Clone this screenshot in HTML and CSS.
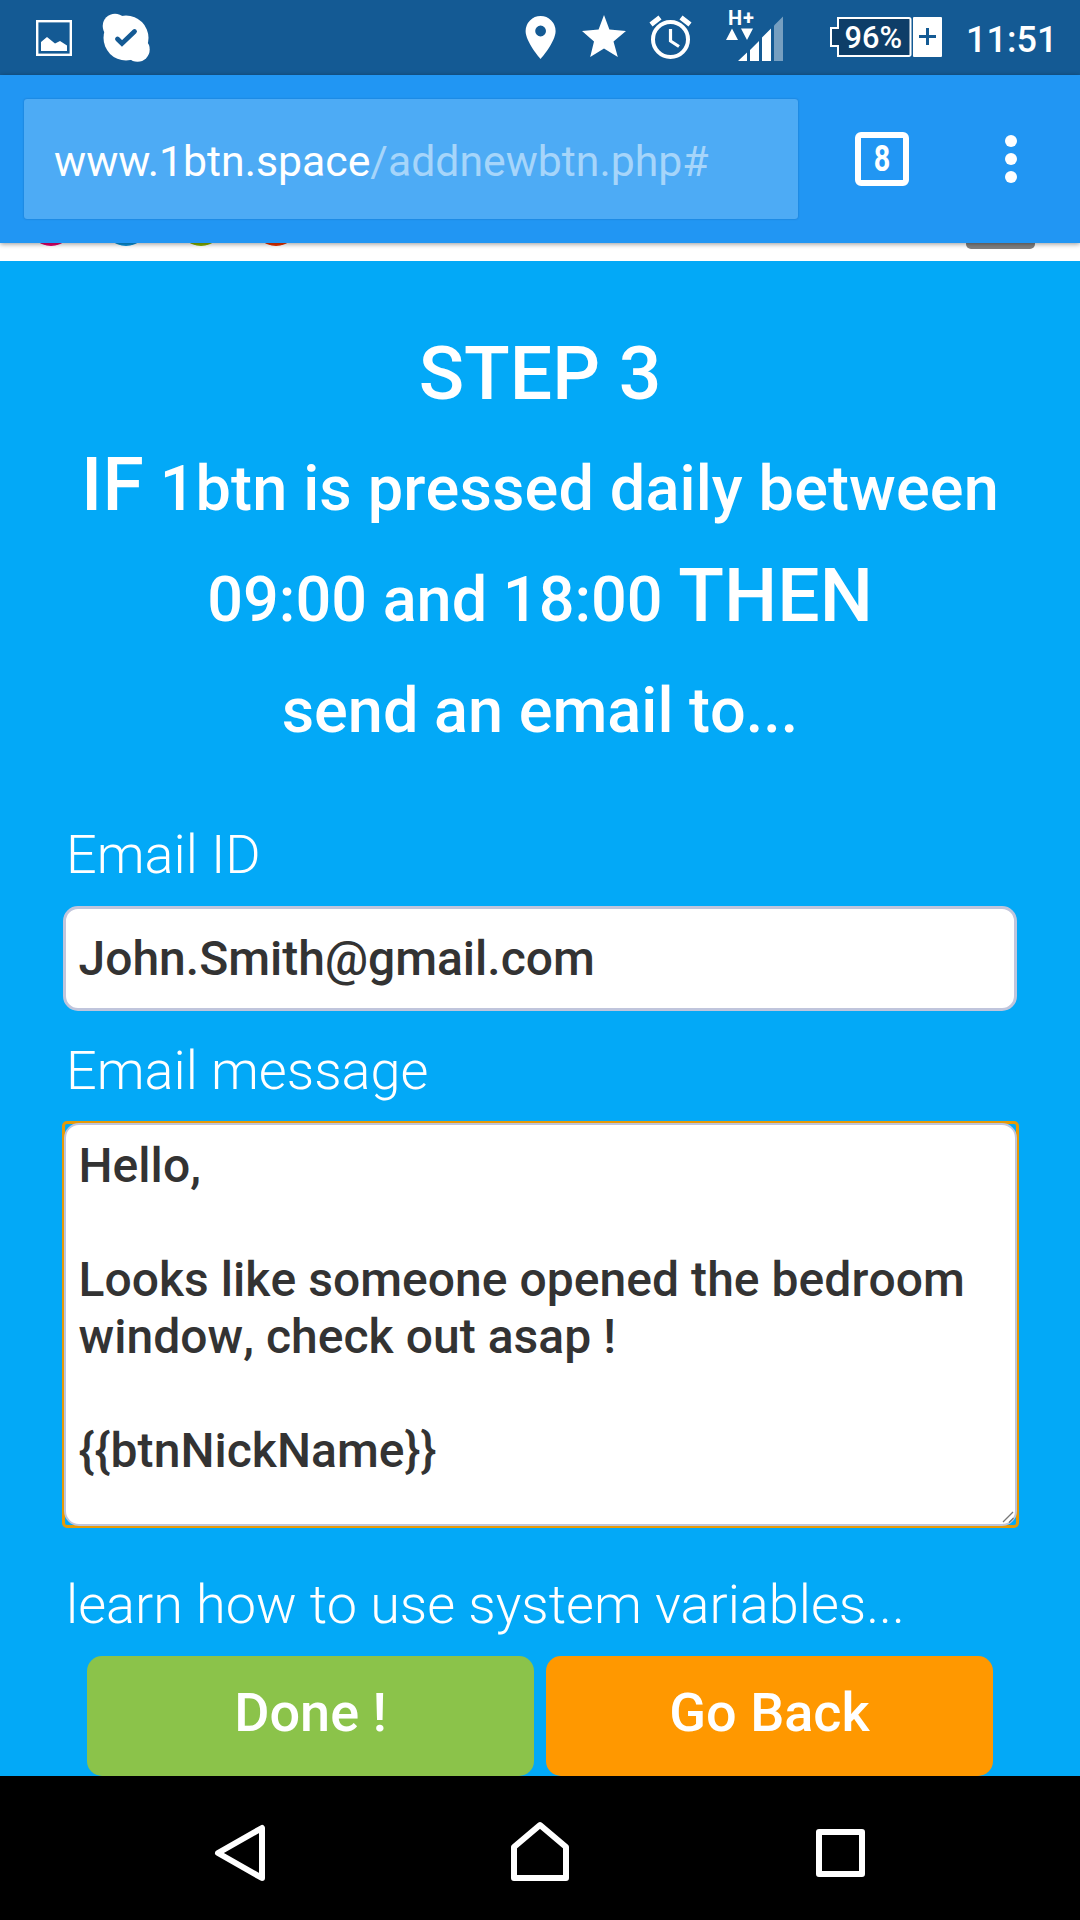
FILE: index.html
```html
<!DOCTYPE html>
<html lang="en">
<head>
<meta charset="utf-8">
<title>1btn</title>
<link rel="stylesheet" href="styles.css">
</head>
<body>
<div class="screen">
  <header class="status">
    <svg class="ic-photo" width="36" height="75" viewBox="36 0 36 75"><rect x="37.2" y="21.2" width="33.6" height="33.6" fill="none" stroke="#fff" stroke-width="2.4"/><path d="M41 51V42L47 37 55 43.500 60 41 67 45.500V51Z" fill="#fff"/></svg>
    <svg class="ic-skype" width="48" height="75" viewBox="102 0 48 75"><g fill="#fff"><circle cx="126" cy="38" r="22.500"/><circle cx="115" cy="26" r="12.300"/><circle cx="137.500" cy="49.500" r="12.200"/></g><path d="M117.500 39 122 43.500 134.500 31.500" fill="none" stroke="#145a94" stroke-width="4.800" stroke-linecap="round"/></svg>
    <svg class="ic-pin" width="31" height="75" viewBox="525 0 31 75"><path fill="#fff" fill-rule="evenodd" d="M540.600 16A15 15 0 0 0 525.600 31C525.600 42 540.600 59 540.600 59S555.600 42 555.600 31A15 15 0 0 0 540.600 16ZM540.600 25.600a5.400 5.400 0 1 1 0 10.800a5.400 5.400 0 0 1 0-10.800Z"/></svg>
    <svg class="ic-star" width="44" height="75" viewBox="582 0 44 75"><path fill="#fff" d="M604 15 609.400 29.500 626 31 613.500 41.500 617.800 57 604 48.400 590.200 57 594 41.500 582 31 598.600 29.500Z"/></svg>
    <svg class="ic-alarm" width="44" height="75" viewBox="649 0 44 75"><g fill="none" stroke="#fff"><circle cx="670.500" cy="39.500" r="17.500" stroke-width="4"/><path d="M670.500 29V41L679 46.500" stroke-width="3.200"/><path d="M651 24.500 660 17.500M690 24.500 681 17.500" stroke-width="5"/></g></svg>
    <svg class="ic-signal" width="58" height="75" viewBox="726 0 58 75"><text class="net" x="728" y="25" textLength="26">H+</text><g fill="#fff"><path d="M726 40H738L732 28.500ZM741 28.500H753L747 40Z"/><path d="M738 61 747 52.500V61ZM750 61V50L759 41V61ZM762 61V37.500L771 28.500V61Z"/><path opacity=".42" d="M774 61V25.500L783 16.500V61Z"/></g></svg>
    <svg class="ic-batt" width="113" height="75" viewBox="830 0 113 75"><path d="M838 18H909a1.500 1.500 0 0 1 1.500 1.500V54.500a1.500 1.500 0 0 1-1.500 1.500H838V46H831V28H838Z" fill="#0e3e68" stroke="#fff" stroke-width="2"/><rect x="913" y="17" width="29" height="40" rx="1" fill="#fff"/><path d="M927.500 28V45M919 36.500H936" stroke="#145a94" stroke-width="3"/><text class="pct" x="844.500" y="47.700" textLength="57.500" lengthAdjust="spacingAndGlyphs">96%</text></svg>
    <time class="clock">11:51</time>
  </header>

  <div class="toolbar">
    <div class="url"><span class="host">www.1btn.space</span><span class="path">/addnewbtn.php#</span></div>
    <div class="tabs"><span>8</span></div>
    <svg class="more" width="12" height="48" viewBox="0 0 12 48" fill="#fff"><circle cx="6" cy="6" r="6"/><circle cx="6" cy="24" r="6"/><circle cx="6" cy="42" r="6"/></svg>
  </div>

  <div class="peek">
    <svg width="1080" height="18" viewBox="0 0 1080 18"><circle cx="51" cy="-19" r="22" fill="#e6006c"/><circle cx="126" cy="-19" r="22" fill="#0a94dc"/><circle cx="201" cy="-19" r="22" fill="#86b000"/><circle cx="276" cy="-19" r="22" fill="#ea3200"/><rect x="966" y="-20" width="69" height="26" rx="5" fill="#808080"/></svg>
  </div>

  <main class="page">
    <h1>STEP 3</h1>
    <p class="rule"><span class="loose"><b>IF</b> 1btn is pressed daily between</span><br>09:00 and 18:00 <b>THEN</b><br>send an email to...</p>
    <label class="label" for="email">Email ID</label>
    <input class="field" id="email" type="text" value="John.Smith@gmail.com">
    <label class="label second" for="msg">Email message</label>
    <div class="area">
      <textarea class="field" id="msg" spellcheck="false">Hello,

Looks like someone opened the bedroom window, check out asap !

{{btnNickName}}</textarea>
      <svg class="grip" width="12" height="12" viewBox="0 0 12 12"><path d="M1 11 11 1M7 11.500 11.500 7" stroke="#777" stroke-width="1.300"/></svg>
    </div>
    <a class="label learn">learn how to use system variables...</a>
    <div class="actions">
      <button class="btn done">Done !</button>
      <button class="btn back">Go Back</button>
    </div>
  </main>

  <nav class="nav">
    <svg width="1080" height="144" viewBox="0 1776 1080 144" fill="none" stroke="#fff" stroke-width="6" stroke-linejoin="round"><path d="M218 1853 262 1828V1878Z" class="back-key"/><path d="M514 1847 540 1825 566 1847V1878H514Z" class="home-key"/><rect x="819" y="1832" width="43" height="42" class="recent-key"/></svg>
  </nav>
</div>
</body>
</html>
```
FILE: styles.css
```css
* { box-sizing: border-box; }
body { margin: 0; font-family: Roboto, sans-serif; color: #fff; }
svg { display: block; flex: none; }
.screen { width: 1080px; height: 1920px; overflow: hidden; display: flex; flex-direction: column; background: #03a9f7; }

.status { height: 75px; flex: none; display: flex; background: #145a94; padding-left: 36px; }
.ic-skype { margin-left: 30px; }
.ic-pin { margin-left: 375px; }
.ic-star { margin-left: 26px; }
.ic-alarm { margin-left: 23px; }
.ic-signal { margin-left: 33px; }
.ic-batt { margin-left: 46px; }
.net { font-size: 20px; font-weight: 700; fill: #fff; }
.pct { font-size: 31px; font-weight: 500; fill: #fff; }
.clock { margin-left: 23px; font-size: 36px; font-weight: 500; line-height: 80px; }

.toolbar { height: 168px; flex: none; display: flex; align-items: center; padding-left: 24px; background: #2196f3; box-shadow: 0 1px 5px rgba(0, 0, 0, .42); z-index: 1; }
.url { width: 774px; height: 120px; padding-left: 30px; border-radius: 3px; background: #4dabf5; box-shadow: 0 0 2px rgba(0, 50, 120, .4); font-size: 42.75px; line-height: 124px; white-space: nowrap; }
.path { color: #a6d5fa; }
.tabs { width: 54px; height: 54px; margin-left: 57px; border: 6px solid #fff; border-radius: 6px; font-size: 36px; font-weight: 700; line-height: 42px; text-align: center; }
.tabs span { display: block; transform: scaleX(.8); }
.more { margin-left: 96px; }

.peek { height: 18px; flex: none; background: #fff; }

.page { height: 1515px; flex: none; padding: 57px 63px 0; }
h1, .rule { margin: 0; text-align: center; font-weight: 500; line-height: 111px; }
h1 { font-size: 75px; }
.rule { font-size: 63px; white-space: nowrap; margin: 4px -30px 0; font-kerning: none; }
.loose { letter-spacing: .12px; }
.rule b { font-size: 75px; font-weight: 500; line-height: 1; }
.label { display: block; padding-left: 3px; font-size: 54px; font-weight: 300; line-height: 63px; margin-top: 57px; }
.field { display: block; width: 954px; height: 105px; margin: 20px 0 0; padding: 0 12.5px; border: 3px solid #c0c5dc; border-radius: 15px; outline: none; background: #fff; color: #333; font: 500 48px/57px Roboto, sans-serif; resize: none; overflow: hidden; }
.label.second { margin-top: 28px; }
.area { position: relative; width: 957px; margin: 19px 0 0 -1px; border: 3px solid #e69a08; border-radius: 5px; }
.area .field { width: 953px; height: 403px; margin: -1px; padding: 12px 12.5px; border-width: 2px; font-kerning: none; letter-spacing: .04px; }
.grip { position: absolute; right: 2px; bottom: 2px; }
.learn { margin-top: 45px; }
.actions { display: flex; gap: 12px; margin: 20px 24px 0; }
.btn { flex: 1; height: 120px; padding: 0 0 8px; border: 0; border-radius: 15px; color: #fff; font: 500 54px Roboto, sans-serif; }
.done { background: #8bc34a; }
.back { background: #ff9800; }

.nav { height: 144px; flex: none; background: #000; }
```
